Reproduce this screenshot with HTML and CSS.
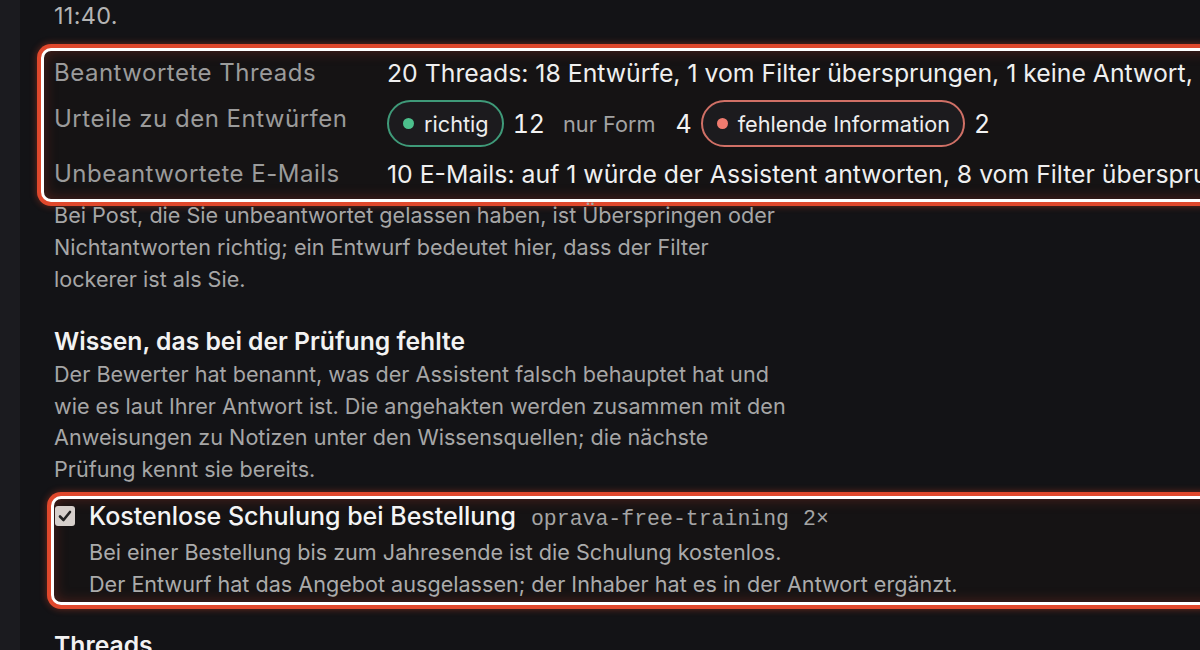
FILE: index.html
```html
<!DOCTYPE html>
<html lang="de">
<head>
<meta charset="utf-8">
<title>Prüfung</title>
<link rel="stylesheet" href="styles.css">
</head>
<body>
<div class="app">
  <aside class="rail"></aside>
  <main class="content">
    <p class="lead">11:40.</p>

    <dl class="stats hl">
      <dt>Beantwortete Threads</dt>
      <dd>20 Threads: 18 Entwürfe, 1 vom Filter übersprungen, 1 keine Antwort, 0 offen</dd>
      <dt class="dt-pills">Urteile zu den Entwürfen</dt>
      <dd class="pills">
        <span class="pill pill-ok"><span class="dot"></span>richtig</span>
        <span class="count">12</span>
        <span class="pill pill-plain">nur Form</span>
        <span class="count">4</span>
        <span class="pill pill-bad"><span class="dot"></span>fehlende Information</span>
        <span class="count">2</span>
      </dd>
      <dt>Unbeantwortete E-Mails</dt>
      <dd>10 E-Mails: auf 1 würde der Assistent antworten, 8 vom Filter übersprungen, 1 keine Antwort</dd>
    </dl>

    <p class="note">Bei Post, die Sie unbeantwortet gelassen haben, ist Überspringen oder<br>Nichtantworten richtig; ein Entwurf bedeutet hier, dass der Filter<br>lockerer ist als Sie.</p>

    <h2 class="section">Wissen, das bei der Prüfung fehlte</h2>
    <p class="note note-tight">Der Bewerter hat benannt, was der Assistent falsch behauptet hat und<br>wie es laut Ihrer Antwort ist. Die angehakten werden zusammen mit den<br>Anweisungen zu Notizen unter den Wissensquellen; die nächste<br>Prüfung kennt sie bereits.</p>

    <div class="fact hl">
      <span class="check" aria-hidden="true">
        <svg viewBox="0 0 20 20" width="20" height="20"><path d="M5 10.5 L8.5 14 L15 6" fill="none" stroke="#222" stroke-width="2.6" stroke-linecap="round" stroke-linejoin="round"/></svg>
      </span>
      <div class="fact-body">
        <div class="fact-head"><span class="fact-title">Kostenlose Schulung bei Bestellung</span><code class="slug">oprava-free-training</code><code class="times">2×</code></div>
        <p class="fact-text">Bei einer Bestellung bis zum Jahresende ist die Schulung kostenlos.<br>Der Entwurf hat das Angebot ausgelassen; der Inhaber hat es in der Antwort ergänzt.</p>
      </div>
    </div>

    <h2 class="section section-threads">Threads</h2>
  </main>
</div>
</body>
</html>
```

FILE: styles.css
```css
html, body {
  margin: 0;
  padding: 0;
  background: #131316;
  overflow: hidden;
  height: 650px;
}

body {
  font-family: "Inter", "Noto Sans", sans-serif;
  color: #ececec;
}

.app {
  display: flex;
  min-height: 650px;
}

.rail {
  width: 20px;
  flex: none;
  background: #1b1b1f;
}

.content {
  flex: none;
  width: 1400px;
  padding-left: 34px;
}

p { margin: 0; }

.lead {
  font-size: 23.5px;
  line-height: 32px;
  color: #b4b4b4;
  letter-spacing: 0.3px;
}

/* highlight annotation */
.hl {
  border: 3px solid #ffffff;
  border-radius: 10px;
  box-shadow: 0 0 0 4px #e0482c, 0 0 6px 5px rgba(224, 72, 44, 0.35), inset 0 0 14px rgba(190, 60, 40, 0.35);
  background: #151314;
}

.stats {
  margin: 16px 0 -3px -13px;
  width: 1300px;
  box-sizing: border-box;
  padding: 6px 10px 9px;
  display: grid;
  grid-template-columns: 333px 1fr;
  row-gap: 11px;
  align-items: start;
}

.stats dt {
  font-size: 24px;
  line-height: 32px;
  color: #9b9b9b;
  letter-spacing: 0.5px;
  white-space: nowrap;
}

.stats dt.dt-pills { padding-top: 3px; }

.stats dd {
  margin: 0;
  font-size: 24.8px;
  line-height: 32px;
  color: #efefef;
  white-space: nowrap;
}

.pills {
  display: flex;
  align-items: center;
  gap: 9px;
}

.pill {
  display: inline-flex;
  align-items: center;
  gap: 10px;
  height: 47px;
  box-sizing: border-box;
  padding: 0 13px 0 14px;
  border: 2px solid transparent;
  border-radius: 24px;
  background: #1c1b1e;
  font-size: 21.7px;
  color: #eeeeee;
}

.pill .dot {
  width: 11px;
  height: 11px;
  border-radius: 50%;
}

.pill-ok { border-color: #3f9a79; }
.pill-ok .dot { background: #4cc08c; }

.pill-bad { border-color: #d07066; }
.pill-bad .dot { background: #ef7b6f; }

.pill-plain {
  background: transparent;
  color: #a3a3a3;
  padding: 0 9px 0 7px;
}

.count {
  font-size: 25px;
  font-variant-numeric: tabular-nums;
  color: #f2f2f2;
}

.note {
  font-size: 21.6px;
  line-height: 32px;
  color: #a6a6a6;
}

.note-tight { line-height: 31.5px; }

.section {
  margin: 28px 0 0;
  font-size: 24.7px;
  line-height: 36px;
  font-weight: 600;
  color: #f2f2f2;
}

.fact {
  margin: 11px 0 0 -3px;
  width: 1300px;
  box-sizing: border-box;
  display: flex;
  align-items: flex-start;
  gap: 14px;
  padding: 0 0 2px 1px;
}

.check {
  flex: none;
  margin-top: 7px;
  width: 20px;
  height: 20px;
  border-radius: 3px;
  background: #d6cfcb;
  display: flex;
}

.fact-head {
  display: flex;
  align-items: baseline;
  gap: 15px;
  height: 37px;
  line-height: 34px;
  white-space: nowrap;
}

.fact-head .times { margin-left: -1px; }

.fact-title {
  font-size: 25px;
  font-weight: 500;
  color: #f4f4f4;
}

.slug, .times {
  font-family: "Liberation Mono", "DejaVu Sans Mono", monospace;
  font-size: 21.5px;
  color: #a4a4a4;
}

.fact-text {
  font-size: 21.6px;
  line-height: 32px;
  color: #ababab;
  white-space: nowrap;
}

.section-threads {
  margin-top: 22px;
}
```
